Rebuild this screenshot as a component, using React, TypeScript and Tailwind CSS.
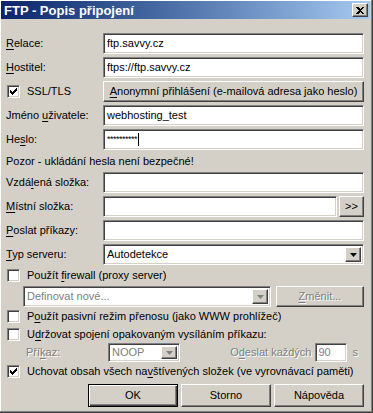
import React from "react";

const sunken =
  "border border-t-[#808080] border-l-[#808080] border-b-white border-r-white shadow-[inset_1px_1px_0_#404040,inset_-1px_-1px_0_#d4d0c8]";
const raised =
  "border border-t-white border-l-white border-r-[#404040] border-b-[#404040] shadow-[inset_-1px_-1px_0_#808080]";
const dim = "text-[#808080] [text-shadow:1px_1px_0_#fff]";

const U = ({ children }: { children: React.ReactNode }) => (
  <span className="underline underline-offset-[2px]">{children}</span>
);

const Field = ({ children, className = "" }: { children?: React.ReactNode; className?: string }) => (
  <div className={`${sunken} flex h-full items-center bg-white pl-[3px] ${className}`}>{children}</div>
);

const Arrow = ({ disabled = false }: { disabled?: boolean }) => (
  <div className={`${raised} flex h-full w-[16px] items-center justify-center bg-[#d4d0c8]`}>
    <svg width="7" height="4" viewBox="0 0 7 4">
      <path d="M0 0h7L3.5 4z" fill={disabled ? "#808080" : "#000"} />
    </svg>
  </div>
);

const Combo = ({ children, disabled = false, className = "" }: { children?: React.ReactNode; disabled?: boolean; className?: string }) => (
  <div className={`${sunken} flex h-full items-center bg-white p-[2px] ${className}`}>
    <span className={`flex-1 pl-[1px] ${disabled ? "text-[#808080]" : ""}`}>{children}</span>
    <Arrow disabled={disabled} />
  </div>
);

const Check = ({ checked = false }: { checked?: boolean }) => (
  <div className={`${sunken} flex h-[13px] w-[13px] shrink-0 items-center justify-center bg-white`}>
    {checked && (
      <svg width="7" height="7" viewBox="0 0 7 7" shapeRendering="crispEdges">
        <path
          d="M6 0h1v3H6zM5 1h1v3H5zM4 2h1v3H4zM0 2h1v3H0zM1 3h1v3H1zM2 4h1v3H2zM3 3h1v3H3z"
          fill="#000"
        />
      </svg>
    )}
  </div>
);

const Row = ({ label, children }: { label: React.ReactNode; children: React.ReactNode }) => (
  <div className="flex h-[21px] items-center">
    <div className="w-[97px] shrink-0">{label}</div>
    <div className="h-full flex-1">{children}</div>
  </div>
);

const CheckRow = ({ checked, children, className = "" }: { checked?: boolean; children: React.ReactNode; className?: string }) => (
  <div className={`flex h-[15px] items-center gap-[7px] pl-[1px] ${className}`}>
    <Check checked={checked} />
    <span>{children}</span>
  </div>
);

const Button = ({ children, def = false, className = "", disabled = false }: { children: React.ReactNode; def?: boolean; className?: string; disabled?: boolean }) => (
  <div
    className={`flex items-center justify-center bg-[#d4d0c8] ${
      def
        ? "border border-black shadow-[inset_1px_1px_0_#fff,inset_-1px_-1px_0_#404040,inset_-2px_-2px_0_#808080]"
        : raised
    } ${disabled ? dim : ""} ${className}`}
  >
    {children}
  </div>
);

export default function App() {
  return (
    <div className="h-[413px] w-[373px] bg-[#d4d0c8] pb-[3px] pl-px pr-[3px] pt-px font-['Liberation_Sans',Arial,sans-serif] text-[11px] leading-none text-black shadow-[inset_-1px_-1px_0_#404040,inset_-2px_-2px_0_#808080,inset_1px_1px_0_#fff]">
      {/* title bar */}
      <div className="flex h-[18px] items-center justify-between bg-linear-to-r from-[#0a246a] to-[#a6caf0] pl-[3px] pr-[2px]">
        <span className="text-[13px] font-bold text-white">FTP - Popis připojení</span>
        <div className={`${raised} flex h-[14px] w-[16px] items-center justify-center bg-[#d4d0c8]`}>
          <svg width="8" height="7" viewBox="0 0 8 7" shapeRendering="crispEdges">
            <path d="M0 0h2l2 2 2-2h2L5 3.5 8 7H6L4 5 2 7H0l3-3.5z" fill="#000" />
          </svg>
        </div>
      </div>

      <div className="flex flex-col pl-[5px] pr-[6px] pt-[14px]">
        <div className="flex flex-col gap-[3px]">
          <Row label={<><U>R</U>elace:</>}>
            <Field>ftp.savvy.cz</Field>
          </Row>
          <Row label={<><U>H</U>ostitel:</>}>
            <Field>ftps://ftp.savvy.cz</Field>
          </Row>
          <div className="flex h-[21px] items-center">
            <CheckRow checked className="w-[97px]">
              SSL/TLS
            </CheckRow>
            <Button className="h-full flex-1">
              <span>
                <U>A</U>nonymní přihlášení (e-mailová adresa jako heslo)
              </span>
            </Button>
          </div>
          <Row label={<>Jméno <U>u</U>živatele:</>}>
            <Field>webhosting_test</Field>
          </Row>
          <Row label={<>He<U>s</U>lo:</>}>
            <Field>
              <span className="text-[9px] tracking-[-0.5px]">**********</span>
              <span className="ml-px h-[13px] w-px bg-black" />
            </Field>
          </Row>
        </div>

        <div className="mt-[3px] flex h-[17px] items-center">Pozor - ukládání hesla není bezpečné!</div>

        <div className="mt-[2px] flex flex-col gap-[3px]">
          <Row label={<>Vzdá<U>l</U>ená složka:</>}>
            <Field />
          </Row>
          <Row label={<><U>M</U>ístní složka:</>}>
            <div className="flex h-full gap-[2px]">
              <Field className="flex-1" />
              <Button className="h-full w-[25px] text-[11px]">&gt;&gt;</Button>
            </div>
          </Row>
          <Row label={<><U>P</U>oslat příkazy:</>}>
            <Field />
          </Row>
          <Row label={<><U>T</U>yp serveru:</>}>
            <Combo>Autodetekce</Combo>
          </Row>
        </div>

        <CheckRow className="mt-[3px]">
          Použít <U>f</U>irewall (proxy server)
        </CheckRow>

        <div className="mt-[3px] flex h-[21px] pl-[17px]">
          <Combo disabled className="w-[248px]">
            Definovat nové...
          </Combo>
          <Button disabled className="ml-auto h-full w-[88px]">
            <span>
              <U>Z</U>měnit...
            </span>
          </Button>
        </div>

        <CheckRow className="mt-[2px]">
          P<U>o</U>užít pasivní režim přenosu (jako WWW prohlížeč)
        </CheckRow>
        <CheckRow className="mt-[3px]">
          U<U>d</U>ržovat spojení opakovaným vysíláním příkazu:
        </CheckRow>

        <div className="mt-px flex h-[19px] items-center">
          <span className={`w-[102px] pl-[20px] ${dim}`}>
            Pří<U>k</U>az:
          </span>
          <Combo disabled className="w-[72px]">
            <span className={dim}>NOOP</span>
          </Combo>
          <span className={`ml-auto ${dim}`}>
            O<U>d</U>eslat každých
          </span>
          <div className={`${sunken} ml-[3px] flex h-full w-[32px] items-center bg-white pl-[3px] ${dim}`}>90</div>
          <span className={`ml-[6px] mr-[6px] ${dim}`}>s</span>
        </div>

        <CheckRow checked className="mt-[2px]">
          Uchovat obsah všech na<U>v</U>štívených složek (ve vyrovnávací paměti)
        </CheckRow>

        <div className="mt-[5px] flex h-[23px] justify-end gap-[3px]">
          <Button def className="w-[90px]">OK</Button>
          <Button className="w-[90px]">Storno</Button>
          <Button className="w-[90px]">Nápověda</Button>
        </div>
      </div>
    </div>
  );
}
